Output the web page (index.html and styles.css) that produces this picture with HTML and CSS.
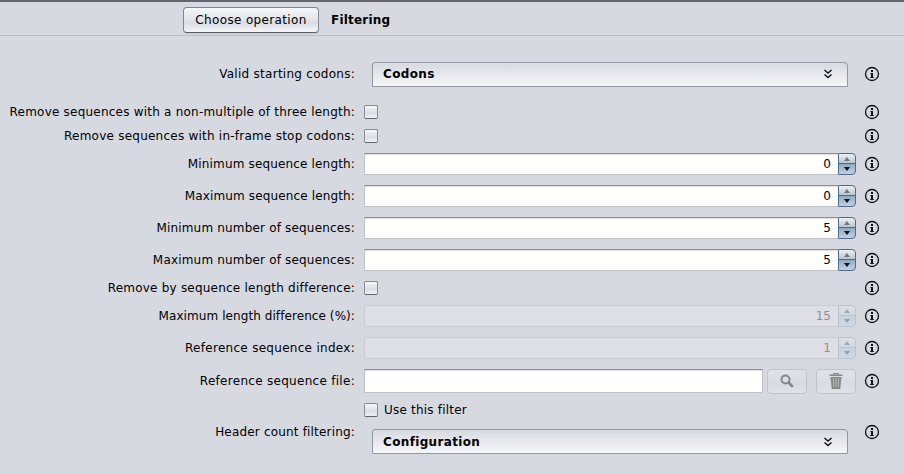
FILE: index.html
```
<!DOCTYPE html>
<html lang="en">
<head>
<meta charset="utf-8">
<title>Filtering</title>
<link rel="stylesheet" href="styles.css">
</head>
<body>
<svg class="defs" width="0" height="0">
  <symbol id="info" viewBox="0 0 16 16"><circle cx="8" cy="8" r="6.5" fill="none" stroke="#111" stroke-width="1.3"/><path fill="#111" d="M7 4h2v2H7zM6.500 7H9v4h.8v1H6.200v-1H7V8h-.5z"/></symbol>
  <symbol id="chevrons" viewBox="0 0 10 10"><path fill="none" stroke="#111" stroke-width="1.4" d="M1.500 1l3.500 3 3.500-3M1.500 5.500l3.500 3 3.500-3"/></symbol>
</svg>
<header class="topbar">
  <button class="choose"><span class="t-choose">Choose operation</span></button>
  <strong class="t-title">Filtering</strong>
</header>
<main class="form">
  <div class="row first"><label class="t-valid">Valid starting codons:</label><div class="control"><div class="panel"><b class="t-codons">Codons</b><svg class="chev"><use href="#chevrons"/></svg></div></div><svg class="info"><use href="#info"/></svg></div>
  <div class="row check"><label class="t-multiple">Remove sequences with a non-multiple of three length:</label><div class="control"><i class="box"></i></div><svg class="info"><use href="#info"/></svg></div>
  <div class="row check"><label class="t-stop">Remove sequences with in-frame stop codons:</label><div class="control"><i class="box"></i></div><svg class="info"><use href="#info"/></svg></div>
  <div class="row"><label class="t-minlen">Minimum sequence length:</label><div class="control"><div class="spinner"><span class="value">0</span><span class="arrows"><i class="up"></i><i class="down"></i></span></div></div><svg class="info"><use href="#info"/></svg></div>
  <div class="row"><label class="t-maxlen">Maximum sequence length:</label><div class="control"><div class="spinner"><span class="value">0</span><span class="arrows"><i class="up"></i><i class="down"></i></span></div></div><svg class="info"><use href="#info"/></svg></div>
  <div class="row"><label class="t-minnum">Minimum number of sequences:</label><div class="control"><div class="spinner"><span class="value">5</span><span class="arrows"><i class="up"></i><i class="down"></i></span></div></div><svg class="info"><use href="#info"/></svg></div>
  <div class="row"><label class="t-maxnum">Maximum number of sequences:</label><div class="control"><div class="spinner"><span class="value">5</span><span class="arrows"><i class="up"></i><i class="down"></i></span></div></div><svg class="info"><use href="#info"/></svg></div>
  <div class="row check"><label class="t-diff">Remove by sequence length difference:</label><div class="control"><i class="box"></i></div><svg class="info"><use href="#info"/></svg></div>
  <div class="row"><label class="t-maxdiff">Maximum length difference (%):</label><div class="control"><div class="spinner disabled"><span class="value">15</span><span class="arrows"><i class="up"></i><i class="down"></i></span></div></div><svg class="info"><use href="#info"/></svg></div>
  <div class="row"><label class="t-index">Reference sequence index:</label><div class="control"><div class="spinner disabled"><span class="value">1</span><span class="arrows"><i class="up"></i><i class="down"></i></span></div></div><svg class="info"><use href="#info"/></svg></div>
  <div class="row file"><label class="t-file">Reference sequence file:</label><div class="control"><div class="path"></div>
    <button class="tool" disabled><svg width="14" height="14" viewBox="0 0 14 14" fill="none" stroke="#858789"><circle cx="5.500" cy="5.500" r="4" stroke-width="2"/><path d="M8.800 8.800l3.200 3.200" stroke-width="2.800" stroke-linecap="round"/></svg></button>
    <button class="tool trash" disabled><svg width="14" height="16" viewBox="0 0 14 16"><path fill="none" stroke="#858789" d="M4.500 2V.5h5V2"/><path fill="#858789" d="M.5 1.500h13V3H.5zM1.500 4h11l-1.300 12H2.800z"/><path stroke="#c5c8cc" stroke-width=".8" d="M4.500 5l.3 9M7 5v9M9.500 5l-.3 9"/></svg></button></div><svg class="info"><use href="#info"/></svg></div>
  <div class="row header-count"><label class="t-header">Header count filtering:</label><div class="control stack"><div class="use"><i class="box"></i><span class="t-use">Use this filter</span></div><div class="panel"><b class="t-config">Configuration</b><svg class="chev"><use href="#chevrons"/></svg></div></div><svg class="info"><use href="#info"/></svg></div>
</main>
</body>
</html>
```
FILE: styles.css
```
* { box-sizing: border-box; }
body { margin: 0; height: 474px; overflow: hidden; background: #d6d9e0; color: #000; font: 12px/16px "DejaVu Sans", sans-serif; }
.defs { display: block; }
.topbar { height: 36px; border-top: 2px solid #65666d; border-bottom: 1px solid #bcbec3; padding: 5px 0 0 183px; display: flex; align-items: flex-start; gap: 12px; }
.topbar strong { line-height: 26px; }
.choose { width: 136px; height: 26px; padding: 0; border: 1px solid #83868e; border-bottom-color: #5c6069; border-radius: 4px; background: linear-gradient(#f5f6f8, #e2e4e9 50%, #d9dce2 60%, #f4f5f8); font: inherit; color: inherit; white-space: nowrap; box-shadow: 0 1px #c5c8cf; }
.row { height: 32px; display: grid; grid-template-columns: 355px 492px 16px; column-gap: 9px; align-items: center; }
.row .info { margin-left: -1px; }
.row label { text-align: right; white-space: nowrap; }
.first { height: 64px; padding-top: 12px; }
.check { height: 24px; }
.file { height: 34px; }
.control { display: flex; align-items: center; }
.info { display: block; width: 16px; height: 16px; }
.panel { flex: 1; height: 25px; margin: 0 8px; padding: 0 14px 0 10px; display: flex; align-items: center; justify-content: space-between; border: 1px solid #9297a1; border-radius: 3px 4px 0 0; background: linear-gradient(#d7dae0, #f5f6f8); }
.chev { width: 10px; height: 10px; }
.box { display: block; flex: none; width: 14px; height: 14px; border: 1px solid #888b93; border-bottom-color: #62656d; border-radius: 2px; background: linear-gradient(#f4f5f8, #dcdee4 60%, #f1f2f5); }
.spinner { display: flex; width: 492px; height: 22px; }
.value { flex: 1; height: 22px; padding-right: 7px; line-height: 21px; text-align: right; background: #fff; border: 1px solid #c0c1c4; border-top-color: #8e9095; border-right: 0; box-shadow: inset 0 1px 1px #ddd; }
.arrows { width: 18px; height: 22px; border: 1px solid #536c82; border-radius: 0 4px 4px 0; display: grid; grid-template-rows: 10px 10px; justify-items: center; align-items: center; background: linear-gradient(#eef2f6 0, #b6c5d4 9px, #536c82 9px, #536c82 10px, #8fa9c0 10px, #bdd3e6 100%); }
.up, .down { width: 0; height: 0; border: 3px solid transparent; }
.up { border-top: 0; border-bottom: 4px solid #6e747b; }
.down { border-bottom: 0; border-top: 4px solid #111; }
.disabled .value { color: #8e9196; background: #dddfe4; border-color: #c9ccd2; box-shadow: none; }
.disabled .arrows { border-color: #bac3ce; background: linear-gradient(#dce0e6 0, #d4d9e0 9px, #bac3ce 9px, #bac3ce 10px, #c9d1dc 10px, #d0d8e2 100%); }
.disabled .up { border-bottom-color: #a5a9b0; }
.disabled .down { border-top-color: #989ea6; }
.path { width: 399px; height: 24px; margin-right: 4px; background: #fff; border: 1px solid #bfc0c3; border-top-color: #8e9095; box-shadow: inset 0 1px 1px #ddd; }
.tool { width: 40px; height: 25px; padding: 0; display: flex; align-items: center; justify-content: center; border: 1px solid #c0c3c9; border-radius: 4px; background: linear-gradient(#e0e2e7, #d8dbe1 60%, #dfe2e7); }
.trash { margin-left: 9px; }
.header-count { height: 68px; }
.stack { display: block; height: 68px; }
.stack .panel { margin-top: 7px; }
.use { height: 24px; display: flex; align-items: center; gap: 6px; }

/* Letter spacing per caption */
.t-choose { letter-spacing: .35px; }
.t-title { letter-spacing: .2px; }
.t-valid { letter-spacing: .27px; }
.t-codons, .t-config { letter-spacing: .35px; }
.t-multiple { letter-spacing: .22px; }
.t-stop { letter-spacing: .235px; }
.t-minlen { letter-spacing: .16px; }
.t-maxlen { letter-spacing: .14px; }
.t-minnum, .t-maxnum { letter-spacing: .18px; }
.t-diff { letter-spacing: .22px; }
.t-maxdiff { letter-spacing: .08px; }
.t-index { letter-spacing: .29px; }
.t-file { letter-spacing: .29px; }
.t-header { letter-spacing: .18px; }
.t-use { letter-spacing: .2px; }
```
